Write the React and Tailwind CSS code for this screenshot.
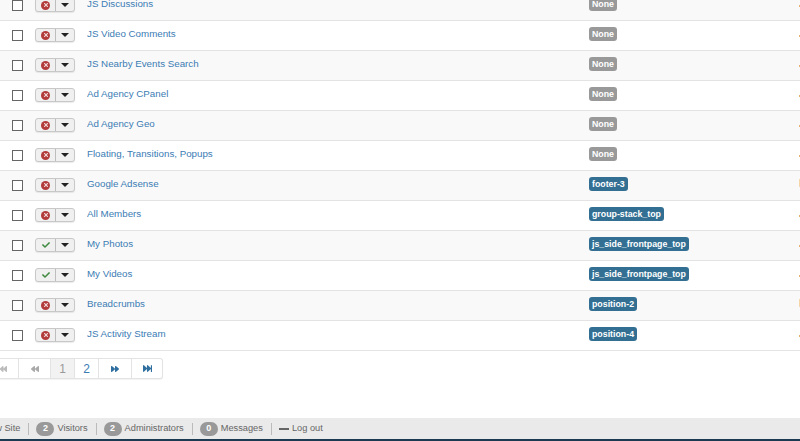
import React from 'react';
import { FaCheck, FaTimes, FaFastBackward, FaBackward, FaForward, FaFastForward } from 'react-icons/fa';

const rows = [
  { title: 'JS Discussions', position: 'None', on: false },
  { title: 'JS Video Comments', position: 'None', on: false },
  { title: 'JS Nearby Events Search', position: 'None', on: false },
  { title: 'Ad Agency CPanel', position: 'None', on: false },
  { title: 'Ad Agency Geo', position: 'None', on: false },
  { title: 'Floating, Transitions, Popups', position: 'None', on: false },
  { title: 'Google Adsense', position: 'footer-3', on: false, tallMark: true },
  { title: 'All Members', position: 'group-stack_top', on: false },
  { title: 'My Photos', position: 'js_side_frontpage_top', on: true },
  { title: 'My Videos', position: 'js_side_frontpage_top', on: true },
  { title: 'Breadcrumbs', position: 'position-2', on: false, tallMark: true },
  { title: 'JS Activity Stream', position: 'position-4', on: false },
];

function StatusButtons({ on }) {
  return (
    <div className="flex h-[14px] w-[40px] shrink-0 rounded-[3px] border border-[#c8c8c8] bg-[#f0f0f0] shadow-[0_1px_1px_rgba(0,0,0,0.08)]">
      <div className="flex w-[20px] items-center justify-center border-r border-[#bdbdbd]">
        {on ? (
          <FaCheck className="text-[8px] text-[#3f8a3f]" />
        ) : (
          <span className="flex h-[9px] w-[9px] items-center justify-center rounded-full bg-[#b23b3b]">
            <FaTimes className="text-[6px] text-[#f3dcdc]" />
          </span>
        )}
      </div>
      <div className="flex flex-1 items-center justify-center">
        <span className="h-0 w-0 border-x-[4px] border-t-[4px] border-x-transparent border-t-[#222]" />
      </div>
    </div>
  );
}

function Row({ row, index }) {
  const isNone = row.position === 'None';
  return (
    <div className={`flex h-[30px] items-center border-b border-[#e3e3e3] ${index % 2 === 0 ? 'bg-[#f9f9f9]' : 'bg-white'}`}>
      <span className="ml-[12px] h-[11px] w-[11px] shrink-0 border border-[#666] bg-white" />
      <div className="mb-[1px] ml-[12px]">
        <StatusButtons on={row.on} />
      </div>
      <a href="#" className="ml-[12px] mb-[4px] w-[502px] text-[9.75px] leading-[14px] text-[#3b7cb4]">{row.title}</a>
      <span className={`mb-[3px] rounded-[3px] px-[3px] text-[8.8px] leading-[14px] font-bold text-white ${isNone ? 'bg-[#999]' : 'bg-[#336f93]'}`}>
        {row.position}
      </span>
      <span className={`ml-auto w-[1px] ${row.tallMark ? 'mb-[5px] h-[8px] bg-[#f5d6a8]' : 'h-[2px] bg-[#e8b070]'}`} />
    </div>
  );
}

function Pagination() {
  const cell = 'flex h-full items-center justify-center border-r border-[#e3e3e3]';
  return (
    <div className="mt-[7px] flex h-[21px] w-[163px] rounded-r-[3px] border border-l-0 border-[#e3e3e3] bg-white text-[12px] text-[#3b7cb4] shadow-[0_1px_1px_rgba(0,0,0,0.05)]">
      <span className={`${cell} w-[19px] pr-[12px] text-[#bbb]`}><FaFastBackward className="shrink-0 text-[8px]" /></span>
      <span className={`${cell} w-[32px] text-[#aaa]`}><FaBackward className="text-[8px]" /></span>
      <span className={`${cell} w-[24px] bg-[#f2f2f2] text-[#999]`}>1</span>
      <span className={`${cell} w-[24px]`}>2</span>
      <span className={`${cell} w-[33px] text-[#2f6f9f]`}><FaForward className="text-[8px]" /></span>
      <span className="flex w-[30px] items-center justify-center text-[#2f6f9f]"><FaFastForward className="text-[9px]" /></span>
    </div>
  );
}

function Sep() {
  return <span className="ml-[8px] mr-[7px] h-[12px] w-px bg-[#bbb]" />;
}

function Pill({ n }) {
  return <span className="mr-[3px] flex h-[14px] w-[18px] items-center justify-center rounded-full bg-[#999] text-[9px] font-bold text-white">{n}</span>;
}

export default function App() {
  return (
    <div className="flex h-[441px] w-[800px] flex-col overflow-hidden bg-white font-['Liberation_Sans',sans-serif]">
      <div className="mt-[-9px]">
        {rows.map((row, i) => <Row key={row.title} row={row} index={i} />)}
      </div>
      <Pagination />
      <div className="mt-auto flex h-[21px] items-center overflow-hidden bg-[#eaeaea] pt-[1px] text-[9.25px] whitespace-nowrap text-[#666]">
        <span className="ml-[-18px]">View Site</span>
        <Sep />
        <Pill n="2" /><span>Visitors</span>
        <Sep />
        <Pill n="2" /><span>Administrators</span>
        <Sep />
        <Pill n="0" /><span>Messages</span>
        <Sep />
        <span className="mr-[3px] h-[2px] w-[10px] bg-[#666]" />
        <span>Log out</span>
      </div>
      <div className="h-[2px] bg-[#1c3a52]" />
    </div>
  );
}
